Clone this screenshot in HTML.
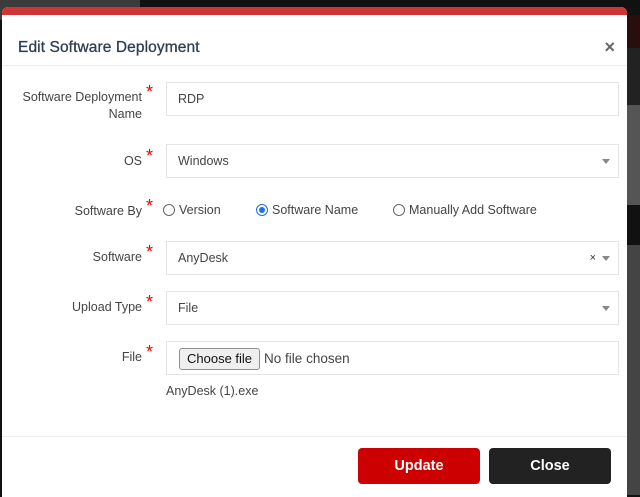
<!DOCTYPE html>
<html><head><style>
*{box-sizing:border-box;margin:0;padding:0}
body{width:640px;height:495px;overflow:hidden;background:#111;font-family:"Liberation Sans",sans-serif;position:relative}
.bgl{position:absolute;left:0;top:0;width:140px;height:20px;background:#3b3b3b}
.rs{position:absolute;left:626px;width:14px}
.modal{position:absolute;left:2px;top:7px;width:625px;height:490px;background:#fff;border-radius:6px 6px 0 0;overflow:hidden}
.red{height:8px;background:#d03535}
.hdr{height:51px;border-bottom:1px solid #eee;position:relative}
.hdr h1{position:absolute;left:16px;top:24px;font-size:15.5px;font-weight:normal;color:#2f3e52;letter-spacing:.1px;-webkit-text-stroke:.3px #2f3e52}
.x{position:absolute;right:12px;top:22px;font-size:18px;color:#666;font-weight:bold}
.lbl{position:absolute;right:485px;font-size:12.5px;color:#444;text-align:right;line-height:17px}
.st{color:#e00;font-size:18px;position:absolute;right:-11px;top:-5px}
.inp{position:absolute;left:164px;width:453px;height:34px;border:1px solid #e4e4e4;font-size:12.5px;color:#444;padding:0 11px;line-height:32px}
.car{position:absolute;right:8px;top:14px;border-left:4px solid transparent;border-right:4px solid transparent;border-top:5px solid #888}
.rad{position:absolute;top:195px;font-size:12.5px;color:#444;line-height:16px}
.rad i{display:inline-block;width:12px;height:12px;border:1px solid #666;border-radius:50%;vertical-align:-2px;margin-right:4px;position:relative}
.rad i.on{border-color:#1a73e8}
.rad i.on:after{content:"";position:absolute;left:2px;top:2px;width:6px;height:6px;border-radius:50%;background:#1a73e8}
.btn{position:absolute;top:441px;width:122px;height:36px;border-radius:4px;color:#fff;font-size:14.5px;font-weight:bold;text-align:center;line-height:36px}
</style></head><body>
<div class="bgl"></div>
<div class="rs" style="top:15px;height:33px;background:#2a0d0d"></div>
<div class="rs" style="top:48px;height:57px;background:#222"></div>
<div class="rs" style="top:105px;height:100px;background:#555"></div>
<div class="rs" style="top:205px;height:40px;background:#111"></div>
<div class="rs" style="top:245px;height:250px;background:#444"></div>
<div class="modal">
<div class="red"></div>
<div class="hdr"><h1>Edit Software Deployment</h1><span class="x">×</span></div>
<div class="lbl" style="top:82px">Software Deployment<br>Name<span class="st">*</span></div>
<div class="inp" style="top:75px">RDP</div>
<div class="lbl" style="top:146px">OS<span class="st">*</span></div>
<div class="inp" style="top:137px">Windows<span class="car"></span></div>
<div class="lbl" style="top:196px">Software By<span class="st">*</span></div>
<div class="rad" style="left:161px"><i></i>Version</div>
<div class="rad" style="left:254px"><i class="on"></i>Software Name</div>
<div class="rad" style="left:391px"><i></i>Manually Add Software</div>
<div class="lbl" style="top:242px">Software<span class="st">*</span></div>
<div class="inp" style="top:234px">AnyDesk<span style="position:absolute;right:22px;font-size:11px;color:#333">×</span><span class="car"></span></div>
<div class="lbl" style="top:292px">Upload Type<span class="st">*</span></div>
<div class="inp" style="top:284px">File<span class="car"></span></div>
<div class="lbl" style="top:342px">File<span class="st">*</span></div>
<div class="inp" style="top:334px;padding-left:12px"><span style="display:inline-block;border:1px solid #8f8f8f;background:#efefef;border-radius:3px;height:22px;line-height:20px;padding:0 7px;font-size:13px;color:#111;vertical-align:middle">Choose file</span><span style="font-size:13.5px;color:#444;margin-left:4px;vertical-align:middle">No file chosen</span></div>
<div style="position:absolute;left:164px;top:377px;font-size:12.5px;color:#444">AnyDesk (1).exe</div>
<div style="position:absolute;left:0;right:0;top:429px;border-top:1px solid #eee"></div>
<div class="btn" style="left:356px;background:#cc0000">Update</div>
<div class="btn" style="left:487px;background:#222">Close</div>
</div>
</body></html>
